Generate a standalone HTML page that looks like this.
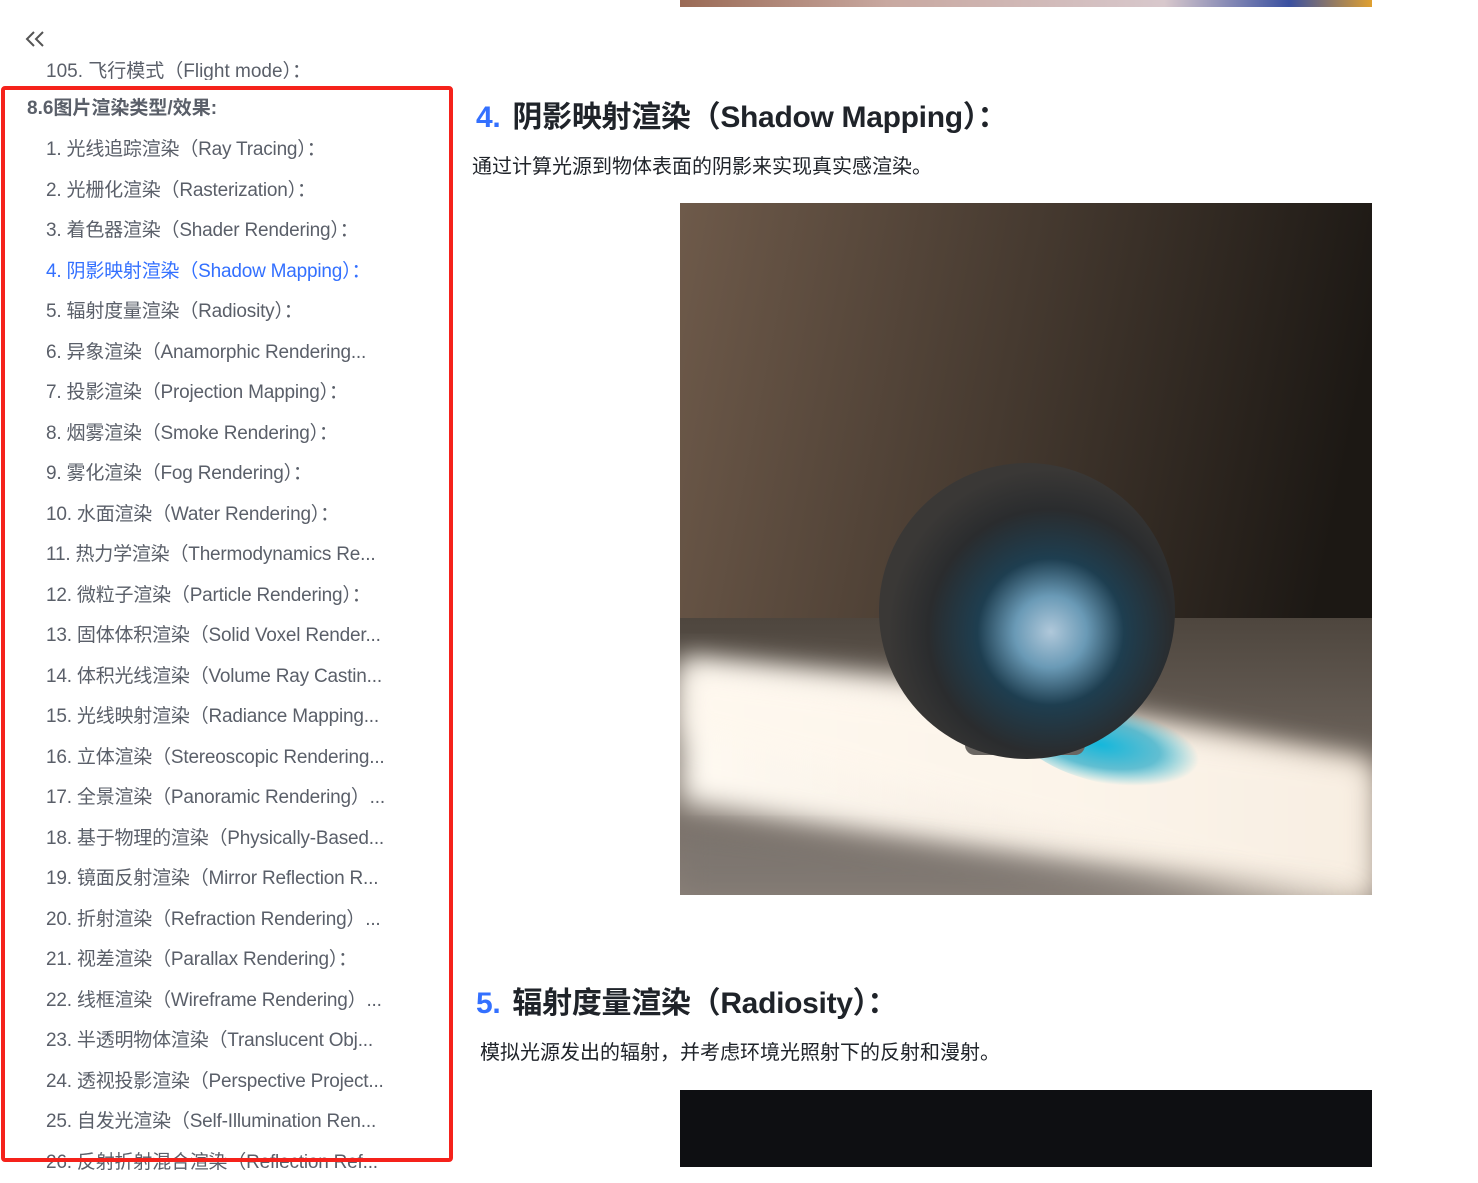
<!DOCTYPE html>
<html><head><meta charset="utf-8"><style>
*{margin:0;padding:0;box-sizing:border-box}
body{width:1478px;height:1167px;overflow:hidden;background:#fff;position:relative;font-family:"Liberation Sans","Noto Sans CJK SC",sans-serif}
.abs{position:absolute;white-space:nowrap}
.side{position:absolute;left:46px;top:130px;font-size:19px;color:#5a5f69;line-height:40.5px;letter-spacing:-0.2px}
.side div{height:40.5px}
.box{position:absolute;left:1px;top:86px;width:452px;height:1076px;border:4px solid #f5221b;border-radius:4px}
h2{position:absolute;font-size:30px;font-weight:bold;color:#1f2329;white-space:nowrap;line-height:40px;letter-spacing:-0.3px}
h2 span{color:#3370ff;margin-right:12px}
p{position:absolute;font-size:20px;color:#1f2329;white-space:nowrap;line-height:30px}
</style></head><body>
<div class="abs" style="left:680px;top:0;width:692px;height:7px;background:linear-gradient(90deg,#9a6a55,#c8a8a0 30%,#d8c8cc 70%,#3a50a0 88%,#e0a030)"></div>
<svg class="abs" style="left:24px;top:29px" width="22" height="20" viewBox="0 0 22 20"><path d="M10 3 L3 10 L10 17 M19 3 L12 10 L19 17" fill="none" stroke="#555" stroke-width="2"/></svg>
<div class="abs" style="left:46px;top:58px;font-size:19px;color:#5a5f69;height:22px;overflow:hidden;line-height:20px;padding-top:4px">105.&nbsp;飞行模式（Flight mode）：</div>
<div class="abs" style="left:27px;top:97px;font-size:19px;font-weight:bold;color:#5a5f69;line-height:24px">8.6图片渲染类型/效果:</div>
<div class="side">
<div>1. 光线追踪渲染（Ray Tracing）：</div>
<div>2. 光栅化渲染（Rasterization）：</div>
<div>3. 着色器渲染（Shader Rendering）：</div>
<div style="color:#3370ff">4. 阴影映射渲染（Shadow Mapping）：</div>
<div>5. 辐射度量渲染（Radiosity）：</div>
<div>6. 异象渲染（Anamorphic Rendering...</div>
<div>7. 投影渲染（Projection Mapping）：</div>
<div>8. 烟雾渲染（Smoke Rendering）：</div>
<div>9. 雾化渲染（Fog Rendering）：</div>
<div>10. 水面渲染（Water Rendering）：</div>
<div>11. 热力学渲染（Thermodynamics Re...</div>
<div>12. 微粒子渲染（Particle Rendering）：</div>
<div>13. 固体体积渲染（Solid Voxel Render...</div>
<div>14. 体积光线渲染（Volume Ray Castin...</div>
<div>15. 光线映射渲染（Radiance Mapping...</div>
<div>16. 立体渲染（Stereoscopic Rendering...</div>
<div>17. 全景渲染（Panoramic Rendering）...</div>
<div>18. 基于物理的渲染（Physically-Based...</div>
<div>19. 镜面反射渲染（Mirror Reflection R...</div>
<div>20. 折射渲染（Refraction Rendering）...</div>
<div>21. 视差渲染（Parallax Rendering）：</div>
<div>22. 线框渲染（Wireframe Rendering）...</div>
<div>23. 半透明物体渲染（Translucent Obj...</div>
<div>24. 透视投影渲染（Perspective Project...</div>
<div>25. 自发光渲染（Self-Illumination Ren...</div>
<div>26. 反射折射混合渲染（Reflection Ref...</div>
</div>
<div class="box"></div>
<h2 style="left:476px;top:98px"><span>4.</span>阴影映射渲染（Shadow Mapping）：</h2>
<p style="left:472px;top:152px">通过计算光源到物体表面的阴影来实现真实感渲染。</p>
<svg class="abs" style="left:680px;top:203px" width="692" height="692" viewBox="0 0 692 692">
<defs>
<linearGradient id="wall" x1="0" y1="0" x2="1" y2="0.2"><stop offset="0" stop-color="#6e5a4a"/><stop offset="0.5" stop-color="#463a30"/><stop offset="1" stop-color="#1c1814"/></linearGradient>
<linearGradient id="floor" x1="0" y1="0" x2="0" y2="1"><stop offset="0" stop-color="#4e463e"/><stop offset="1" stop-color="#8a8078"/></linearGradient>
<linearGradient id="beam" x1="0" y1="0" x2="1" y2="0"><stop offset="0" stop-color="#fffaf2"/><stop offset="0.6" stop-color="#f4ebe0"/><stop offset="1" stop-color="#e8d8c6"/></linearGradient>
<radialGradient id="sph" cx="0.58" cy="0.57" r="0.55"><stop offset="0" stop-color="#b0c8da"/><stop offset="0.22" stop-color="#6a9ab6"/><stop offset="0.45" stop-color="#1e3e50"/><stop offset="0.75" stop-color="#2a2c2e"/><stop offset="1" stop-color="#3a3836"/></radialGradient>
<radialGradient id="sh" cx="0.4" cy="0.5" r="0.5"><stop offset="0" stop-color="#14b8dc"/><stop offset="0.6" stop-color="#20a8c8" stop-opacity=".7"/><stop offset="1" stop-color="#20b8d8" stop-opacity="0"/></radialGradient>
<filter id="bl"><feGaussianBlur stdDeviation="14"/></filter>
</defs>
<rect width="692" height="692" fill="url(#wall)"/>
<rect y="415" width="692" height="277" fill="url(#floor)"/>
<path d="M0 455 L280 480 L692 560 L692 700 L560 692 L0 600 Z" fill="url(#beam)" filter="url(#bl)"/>
<path d="M0 460 L692 560 L692 692 L620 692 L0 530Z" fill="#fff8ee" opacity=".7" filter="url(#bl)"/>
<path d="M0 620 L692 692 L0 692Z" fill="#7a7470" opacity=".6" filter="url(#bl)"/>
<ellipse cx="440" cy="545" rx="100" ry="38" fill="url(#sh)" transform="rotate(10 440 545)"/>
<rect x="285" y="530" width="120" height="22" rx="10" fill="#6a6662"/>
<circle cx="347" cy="408" r="148" fill="url(#sph)"/>
</svg>
<h2 style="left:476px;top:984px"><span>5.</span>辐射度量渲染（Radiosity）：</h2>
<p style="left:480px;top:1038px">模拟光源发出的辐射，并考虑环境光照射下的反射和漫射。</p>
<div class="abs" style="left:680px;top:1090px;width:692px;height:77px;background:#0e0f12"></div>
</body></html>
